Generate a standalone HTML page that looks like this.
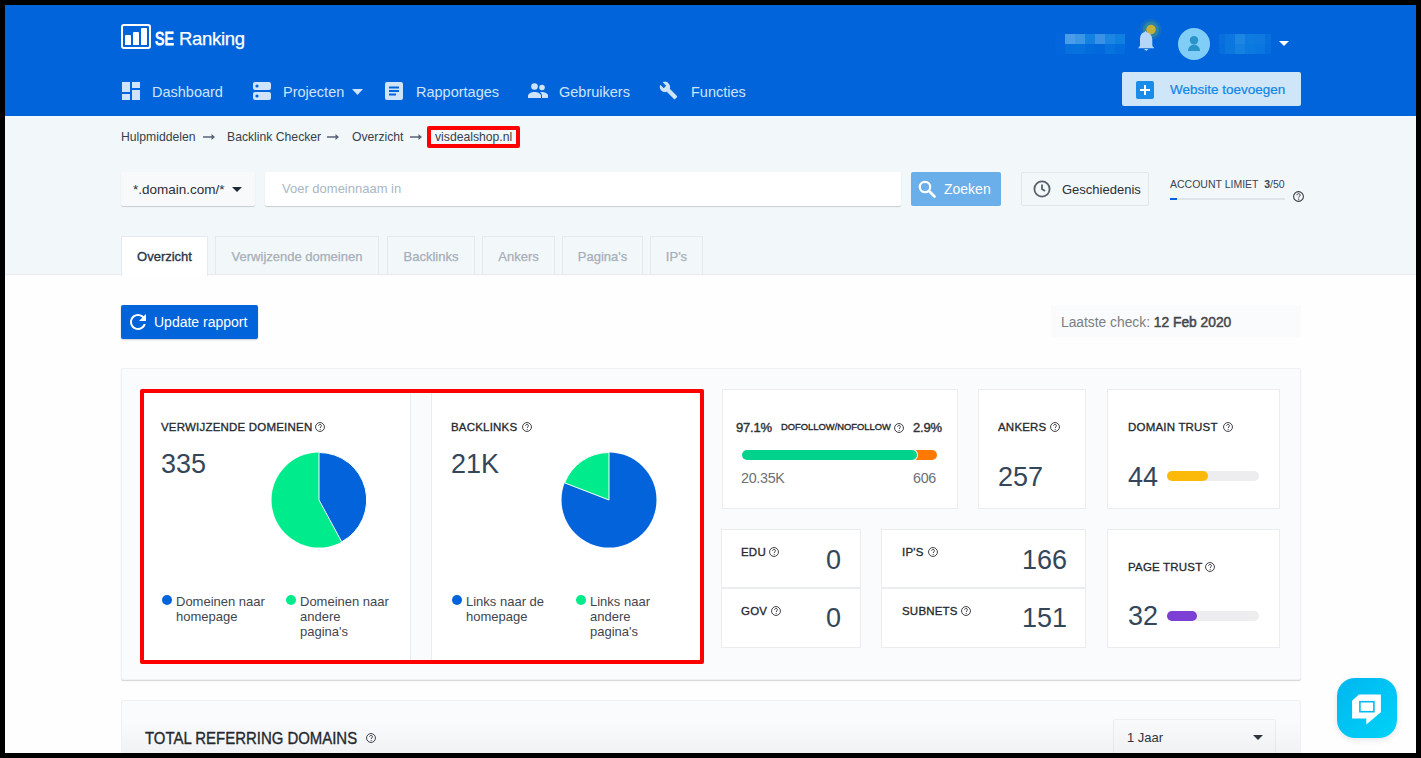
<!DOCTYPE html>
<html><head><meta charset="utf-8">
<style>
*{box-sizing:border-box;margin:0;padding:0}
html,body{width:1421px;height:758px;overflow:hidden;background:#fefeff;font-family:"Liberation Sans",sans-serif;position:relative}
.a{position:absolute;white-space:nowrap}
.bd{position:absolute;background:#000;z-index:100}
#hdr{position:absolute;left:0;top:0;width:1421px;height:116px;background:#0264db}
#sub{position:absolute;left:0;top:116px;width:1421px;height:159px;background:#f2f7fa}
.nav{color:#cfe4fa;font-size:14.5px;line-height:18px}
.bc{color:#363f4b;font-size:12.2px;line-height:16px}
.arr{position:absolute;width:12px;height:6px}
.card{position:absolute;background:#fff;border:1px solid #ebecef}
.lbl{font-size:11.5px;font-weight:normal;-webkit-text-stroke:0.3px #25282d;color:#25282d;letter-spacing:0.2px;line-height:14px}
.num{font-size:27px;color:#34465a;line-height:30px}
.q{position:absolute;width:10px;height:10px}
.tab{position:absolute;top:236px;height:39px;border:1px solid #e6e9ed;border-bottom:none;background:#f2f7fa;color:#a6aeb8;-webkit-text-stroke:0.25px #a6aeb8;font-size:13px;line-height:40px;text-align:center}
.leg{font-size:13px;line-height:15px;color:#3f464f}
.dot{position:absolute;width:10px;height:10px;border-radius:50%}
</style></head><body>
<svg width="0" height="0" style="position:absolute"><defs><symbol id="qm" viewBox="0 0 20 20"><circle cx="10" cy="10" r="8.9" fill="none" stroke="#34373c" stroke-width="1.9"/><path d="M7.2 7.8c0-1.8 1.3-3 2.9-3s2.9 1.2 2.9 2.7c0 2.2-2.7 2.3-2.7 4.6" fill="none" stroke="#34373c" stroke-width="1.8"/><circle cx="10.3" cy="14.9" r="1.15" fill="#34373c"/></symbol></defs></svg>
<!-- HEADER -->
<div id="hdr"></div>
<div class="a" style="left:121px;top:24px;width:30px;height:25px;border:2px solid #fff;border-radius:3px"></div>
<div class="a" style="left:125px;top:35px;width:6px;height:10px;background:#fff;border-radius:1px 1px 0 0"></div>
<div class="a" style="left:133px;top:32px;width:6px;height:13px;background:#fff;border-radius:1px 1px 0 0"></div>
<div class="a" style="left:141px;top:28px;width:6px;height:17px;background:#fff;border-radius:1px 1px 0 0"></div>
<div class="a" style="left:155px;top:27px;color:#fff;font-size:18.5px;line-height:24px;-webkit-text-stroke:1px #fff;transform:scaleX(0.76);transform-origin:0 0">SE</div><div class="a" style="left:179px;top:27px;color:#fff;font-size:18.5px;line-height:24px;letter-spacing:-0.3px;-webkit-text-stroke:0.25px #fff">Ranking</div>

<svg class="a" style="left:122px;top:82px" width="18" height="18" viewBox="0 0 18 18"><path fill="#cfe4fa" d="M0 0h8v10H0zM0 12h8v6H0zM10 0h8v6h-8zM10 8h8v10h-8z"/></svg>
<div class="a nav" style="left:152px;top:83px">Dashboard</div>
<svg class="a" style="left:253px;top:82px" width="18" height="18" viewBox="0 0 18 18"><rect x="0" y="0" width="18" height="8" rx="2" fill="#cfe4fa"/><rect x="0" y="10" width="18" height="8" rx="2" fill="#cfe4fa"/><circle cx="4" cy="4" r="1.6" fill="#0264db"/><circle cx="4" cy="14" r="1.6" fill="#0264db"/></svg>
<div class="a nav" style="left:283px;top:83px">Projecten</div>
<svg class="a" style="left:352px;top:89px" width="11" height="6" viewBox="0 0 11 6"><path d="M0 0h11L5.5 6z" fill="#cfe4fa"/></svg>
<svg class="a" style="left:385px;top:82px" width="18" height="18" viewBox="0 0 18 18"><rect width="18" height="18" rx="2" fill="#cfe4fa"/><path d="M4 4.5h10v2H4zM4 8h10v2H4zM4 11.5h7v2H4z" fill="#0264db"/></svg>
<div class="a nav" style="left:416px;top:83px">Rapportages</div>
<svg class="a" style="left:528px;top:83px" width="20" height="15" viewBox="0 0 20 15"><circle cx="6.5" cy="3.5" r="3.3" fill="#cfe4fa"/><circle cx="14" cy="4.5" r="2.8" fill="#cfe4fa"/><path d="M0 15v-2c0-2.5 3.5-4 6.5-4s6.5 1.5 6.5 4v2z" fill="#cfe4fa"/><path d="M13.5 9c3 0 6.5 1.3 6.5 3.5V15h-6v-2c0-1.6-.5-3-2-3.8z" fill="#cfe4fa"/></svg>
<div class="a nav" style="left:559px;top:83px">Gebruikers</div>
<svg class="a" style="left:659px;top:81px" width="19" height="19" viewBox="0 0 24 24"><path fill="#cfe4fa" d="M22.7 19l-9.1-9.1c.9-2.3.4-5-1.5-6.9-2-2-5-2.4-7.4-1.3L9 6 6 9 1.6 4.7C.4 7.1.9 10.1 2.9 12.1c1.9 1.9 4.6 2.4 6.9 1.5l9.1 9.1c.4.4 1 .4 1.4 0l2.3-2.3c.5-.4.5-1.1.1-1.4z"/></svg>
<div class="a nav" style="left:691px;top:83px">Functies</div>

<div class="a" style="left:1055px;top:34px;width:10px;height:10px;background:#0565dc"></div><div class="a" style="left:1055px;top:44px;width:10px;height:10px;background:#0466dc"></div><div class="a" style="left:1065px;top:34px;width:10px;height:10px;background:#4a9de8"></div><div class="a" style="left:1065px;top:44px;width:10px;height:10px;background:#0670dd"></div><div class="a" style="left:1075px;top:34px;width:10px;height:10px;background:#3d95e6"></div><div class="a" style="left:1075px;top:44px;width:10px;height:10px;background:#0672de"></div><div class="a" style="left:1085px;top:34px;width:10px;height:10px;background:#1281e2"></div><div class="a" style="left:1085px;top:44px;width:10px;height:10px;background:#036cdc"></div><div class="a" style="left:1095px;top:34px;width:10px;height:10px;background:#3a92e6"></div><div class="a" style="left:1095px;top:44px;width:10px;height:10px;background:#0268db"></div><div class="a" style="left:1105px;top:34px;width:10px;height:10px;background:#1d86e3"></div><div class="a" style="left:1105px;top:44px;width:10px;height:10px;background:#0672de"></div><div class="a" style="left:1115px;top:34px;width:10px;height:10px;background:#0f80e0"></div><div class="a" style="left:1115px;top:44px;width:10px;height:10px;background:#046ddd"></div>
<svg class="a" style="left:1130px;top:15px" width="36" height="40" viewBox="0 0 36 40"><circle cx="21" cy="14.6" r="10.5" fill="#1a6fb8" opacity=".8"/><circle cx="21" cy="14.6" r="8" fill="#2a84a8"/><circle cx="21" cy="14.6" r="4.8" fill="#c4b03a"/><path d="M8 33.2h16.3l-2-2.4V24.5c0-4-2.3-6.5-6.1-7.6v-.3c0-.5-.3-.7-.7-.7s-.7.2-.7.7v.3C11 18 10 20.5 10 24.5v6.3z" fill="#b5d6f7"/><path d="M14 34h4.5l-2.25 2z" fill="#b5d6f7"/></svg>
<div class="a" style="left:1178px;top:28px;width:32px;height:32px;border-radius:50%;background:#80cdf7"></div>
<svg class="a" style="left:1186px;top:35px" width="16" height="17" viewBox="0 0 16 17"><circle cx="8" cy="5.3" r="4.2" fill="#2a94c8"/><path d="M2 16c0-3.6 2.5-6.2 6-6.2s6 2.6 6 6.2z" fill="#2a94c8"/></svg>
<div class="a" style="left:1219px;top:34px;width:6px;height:10px;background:#0a6fdd"></div><div class="a" style="left:1219px;top:44px;width:6px;height:10px;background:#066ddc"></div><div class="a" style="left:1225px;top:34px;width:10px;height:10px;background:#0b76df"></div><div class="a" style="left:1225px;top:44px;width:10px;height:10px;background:#0a77df"></div><div class="a" style="left:1235px;top:34px;width:10px;height:10px;background:#1d85e3"></div><div class="a" style="left:1235px;top:44px;width:10px;height:10px;background:#1480e1"></div><div class="a" style="left:1245px;top:34px;width:10px;height:10px;background:#0e7be0"></div><div class="a" style="left:1245px;top:44px;width:10px;height:10px;background:#0a7adf"></div><div class="a" style="left:1255px;top:34px;width:10px;height:10px;background:#1079df"></div><div class="a" style="left:1255px;top:44px;width:10px;height:10px;background:#0977df"></div><div class="a" style="left:1265px;top:34px;width:6px;height:10px;background:#0870dd"></div><div class="a" style="left:1265px;top:44px;width:6px;height:10px;background:#056ddc"></div>
<svg class="a" style="left:1279px;top:41px" width="10" height="5" viewBox="0 0 10 5"><path d="M0 0h10L5 5z" fill="#fff"/></svg>
<div class="a" style="left:1122px;top:72px;width:179px;height:34px;background:#cfe5f8;border-radius:2px"></div>
<div class="a" style="left:1136px;top:81px;width:18px;height:18px;background:#1a8be6;border-radius:2px"></div>
<svg class="a" style="left:1136px;top:81px" width="18" height="18" viewBox="0 0 18 18"><path d="M8 4h2v4h4v2h-4v4H8v-4H4V8h4z" fill="#fff"/></svg>
<div class="a" style="left:1170px;top:81px;color:#0d86e8;font-size:13.5px;line-height:18px;-webkit-text-stroke:0.2px #0d86e8">Website toevoegen</div>

<!-- SUB -->
<div id="sub"></div>
<div class="a bc" style="left:121px;top:129px">Hulpmiddelen</div>
<svg class="arr" style="left:203px;top:134px" viewBox="0 0 12 6"><path d="M0 2.2h8.5V0L12 3 8.5 6V3.8H0z" fill="#5a6478"/></svg>
<div class="a bc" style="left:227px;top:129px">Backlink Checker</div>
<svg class="arr" style="left:327px;top:134px" viewBox="0 0 12 6"><path d="M0 2.2h8.5V0L12 3 8.5 6V3.8H0z" fill="#5a6478"/></svg>
<div class="a bc" style="left:352px;top:129px">Overzicht</div>
<svg class="arr" style="left:410px;top:134px" viewBox="0 0 12 6"><path d="M0 2.2h8.5V0L12 3 8.5 6V3.8H0z" fill="#5a6478"/></svg>
<div class="a" style="left:427px;top:126px;width:93px;height:22px;border:4px solid #f00;border-radius:2px"></div>
<div class="a bc" style="left:435px;top:129px">visdealshop.nl</div>

<!-- search row -->
<div class="a" style="left:121px;top:172px;width:134px;height:34px;background:#f8f9fb;border-radius:2px;box-shadow:0 1px 1px rgba(0,0,0,.18)"></div>
<div class="a" style="left:133px;top:182px;font-size:13.5px;line-height:16px;color:#2b2e33">*.domain.com/*</div>
<svg class="a" style="left:232px;top:187px" width="10" height="5" viewBox="0 0 10 5"><path d="M0 0h10L5 5z" fill="#1e2a35"/></svg>
<div class="a" style="left:265px;top:172px;width:636px;height:34px;background:#fff;border-radius:2px;box-shadow:0 1px 1px rgba(0,0,0,.18)"></div>
<div class="a" style="left:282px;top:181px;font-size:13px;line-height:16px;color:#aab6c3">Voer domeinnaam in</div>
<div class="a" style="left:911px;top:172px;width:90px;height:34px;background:#6aaeea;border-radius:2px"></div>
<svg class="a" style="left:918px;top:180px" width="18" height="18" viewBox="0 0 18 18"><circle cx="7" cy="7" r="5.2" fill="none" stroke="#fff" stroke-width="2.2"/><path d="M11 11l5.5 5.5" stroke="#fff" stroke-width="2.6" stroke-linecap="round"/></svg>
<div class="a" style="left:944px;top:180px;font-size:14px;line-height:18px;color:#fff">Zoeken</div>
<div class="a" style="left:1021px;top:172px;width:128px;height:34px;background:#f2f7fa;border:1px solid #e2e6eb;border-radius:2px"></div>
<svg class="a" style="left:1033px;top:180px" width="18" height="18" viewBox="0 0 18 18"><circle cx="9" cy="9" r="7.6" fill="none" stroke="#59616b" stroke-width="1.8"/><path d="M9 4.5V9l3 2" fill="none" stroke="#59616b" stroke-width="1.8"/></svg>
<div class="a" style="left:1062px;top:182px;font-size:13px;line-height:16px;color:#2b2e33">Geschiedenis</div>
<div class="a" style="left:1170px;top:178px;font-size:10.5px;line-height:12px;color:#3b4350">ACCOUNT LIMIET &nbsp;<b>3</b>/50</div>
<div class="a" style="left:1170px;top:198px;width:115px;height:2px;background:#dfe4ea"></div>
<div class="a" style="left:1170px;top:198px;width:7px;height:2px;background:#0264db"></div>
<svg class="a" style="left:1293px;top:191px" width="11" height="11"><use href="#qm"/></svg>

<!-- tabs -->
<div class="a" style="left:0;top:274px;width:1421px;height:1px;background:#e6eaee;z-index:2"></div>
<div class="tab" style="z-index:3;left:121px;width:87px;background:#fff;color:#2a3646;-webkit-text-stroke:0.35px #2a3646;height:40px">Overzicht</div>
<div class="tab" style="left:215px;width:164px">Verwijzende domeinen</div>
<div class="tab" style="left:387px;width:88px">Backlinks</div>
<div class="tab" style="left:482px;width:73px">Ankers</div>
<div class="tab" style="left:562px;width:81px">Pagina's</div>
<div class="tab" style="left:650px;width:53px">IP's</div>

<!-- update row -->
<div class="a" style="left:121px;top:305px;width:137px;height:34px;background:#0264db;border-radius:2px;box-shadow:0 1px 2px rgba(0,0,0,.2)"></div>
<svg class="a" style="left:126px;top:310px" width="24" height="24" viewBox="0 0 24 24"><path fill="#fff" d="M17.65 6.35C16.2 4.9 14.21 4 12 4c-4.42 0-7.99 3.58-7.99 8s3.57 8 7.99 8c3.73 0 6.84-2.55 7.73-6h-2.08c-.82 2.33-3.04 4-5.65 4-3.31 0-6-2.69-6-6s2.69-6 6-6c1.66 0 3.14.69 4.22 1.78L13 11h7V4l-2.35 2.35z"/></svg>
<div class="a" style="left:154px;top:313px;font-size:14px;line-height:18px;color:#fff">Update rapport</div>
<div class="a" style="left:1051px;top:305px;width:250px;height:32px;background:#fafbfd"></div>
<div class="a" style="left:1061px;top:315px;font-size:13.8px;line-height:16px;color:#7b7e83">Laatste check: <span style="color:#45474b;-webkit-text-stroke:0.5px #45474b">12 Feb 2020</span></div>

<!-- main container -->
<div class="a" style="left:121px;top:368px;width:1180px;height:312px;background:#fafbfd;border:1px solid #f0f1f4;border-radius:2px;box-shadow:0 1px 1px rgba(0,0,0,.16)"></div>

<div class="card" style="left:140px;top:389px;width:271px;height:275px"></div>
<div class="card" style="left:431px;top:389px;width:273px;height:275px"></div>
<div class="a" style="left:140px;top:389px;width:564px;height:275px;border:4px solid #f00;border-radius:2px"></div>

<div class="a lbl" style="left:161px;top:420px">VERWIJZENDE DOMEINEN</div>
<div class="a num" style="left:161px;top:449px">335</div>
<svg class="a" style="left:270px;top:451px" width="98" height="98" viewBox="0 0 98 98"><g transform="translate(49 49)"><circle r="47.5" fill="#00ec8c"/><path d="M0 0V-47.5A47.5 47.5 0 0 1 22.7 41.8z" fill="#0263da" stroke="#fff" stroke-width="1"/></g></svg>
<div class="dot" style="left:162px;top:595px;background:#0263da"></div>
<div class="a leg" style="left:176px;top:594px">Domeinen naar<br>homepage</div>
<div class="dot" style="left:286px;top:595px;background:#00ec8c"></div>
<div class="a leg" style="left:300px;top:594px">Domeinen naar<br>andere<br>pagina's</div>

<div class="a lbl" style="left:451px;top:420px">BACKLINKS</div>
<div class="a num" style="left:451px;top:449px">21K</div>
<svg class="a" style="left:560px;top:451px" width="98" height="98" viewBox="0 0 98 98"><g transform="translate(49 49)"><circle r="47.5" fill="#0263da"/><path d="M0 0L-44.3 -17.1A47.5 47.5 0 0 1 0 -47.5z" fill="#00ec8c" stroke="#fff" stroke-width="1"/></g></svg>
<div class="dot" style="left:452px;top:595px;background:#0263da"></div>
<div class="a leg" style="left:466px;top:594px">Links naar de<br>homepage</div>
<div class="dot" style="left:576px;top:595px;background:#00ec8c"></div>
<div class="a leg" style="left:590px;top:594px">Links naar<br>andere<br>pagina's</div>

<!-- dofollow -->
<div class="card" style="left:722px;top:389px;width:236px;height:120px"></div>
<div class="a" style="left:736px;top:421px;font-size:13px;line-height:14px;color:#303338;-webkit-text-stroke:0.4px #303338;letter-spacing:-0.2px">97.1%</div>
<div class="a" style="left:781px;top:421px;font-size:9.4px;line-height:12px;color:#25282d;-webkit-text-stroke:0.35px #25282d">DOFOLLOW/NOFOLLOW</div>
<div class="a" style="left:913px;top:421px;font-size:13px;line-height:14px;color:#303338;-webkit-text-stroke:0.4px #303338;letter-spacing:-0.2px">2.9%</div>
<div class="a" style="left:742px;top:450px;width:195px;height:10px;border-radius:5px;background:#ff7800"></div>
<div class="a" style="left:742px;top:450px;width:175px;height:10px;border-radius:5px;background:#00d28c;box-shadow:0 0 0 1px #fff"></div>
<div class="a" style="left:741px;top:470px;font-size:14.3px;line-height:16px;color:#6c7076;letter-spacing:-0.3px">20.35K</div>
<div class="a" style="left:913px;top:470px;font-size:14.3px;line-height:16px;color:#6c7076;letter-spacing:-0.3px">606</div>

<div class="card" style="left:978px;top:389px;width:108px;height:120px"></div>
<div class="a lbl" style="left:998px;top:420px">ANKERS</div>
<div class="a num" style="left:998px;top:462px">257</div>

<div class="card" style="left:1107px;top:389px;width:173px;height:120px"></div>
<div class="a lbl" style="left:1128px;top:420px">DOMAIN TRUST</div>
<div class="a num" style="left:1128px;top:462px">44</div>
<div class="a" style="left:1167px;top:471px;width:92px;height:10px;border-radius:5px;background:#ededef"></div>
<div class="a" style="left:1167px;top:471px;width:41px;height:10px;border-radius:5px;background:#fbb90a"></div>

<div class="card" style="left:721px;top:529px;width:140px;height:59px"></div>
<div class="card" style="left:721px;top:588px;width:140px;height:60px"></div>
<div class="a lbl" style="left:741px;top:545px">EDU</div>
<div class="a num" style="left:826px;top:545px">0</div>
<div class="a lbl" style="left:741px;top:604px">GOV</div>
<div class="a num" style="left:826px;top:603px">0</div>

<div class="card" style="left:881px;top:529px;width:205px;height:59px"></div>
<div class="card" style="left:881px;top:588px;width:205px;height:60px"></div>
<div class="a lbl" style="left:902px;top:545px">IP'S</div>
<div class="a num" style="left:1022px;top:545px">166</div>
<div class="a lbl" style="left:902px;top:604px">SUBNETS</div>
<div class="a num" style="left:1022px;top:603px">151</div>

<div class="card" style="left:1107px;top:529px;width:173px;height:119px"></div>
<div class="a lbl" style="left:1128px;top:560px">PAGE TRUST</div>
<div class="a num" style="left:1128px;top:601px">32</div>
<div class="a" style="left:1167px;top:611px;width:92px;height:10px;border-radius:5px;background:#ededef"></div>
<div class="a" style="left:1167px;top:611px;width:30px;height:10px;border-radius:5px;background:#7b3fd3"></div>

<!-- second container -->
<div class="a" style="left:121px;top:700px;width:1180px;height:80px;background:#fafbfd;border:1px solid #f0f1f4;border-radius:2px"></div>
<div class="a" style="left:145px;top:729px;font-size:16.5px;line-height:18px;color:#24292f;-webkit-text-stroke:0.35px #24292f;transform:scaleX(0.905);transform-origin:0 0">TOTAL REFERRING DOMAINS</div>
<div class="a" style="left:1113px;top:719px;width:163px;height:50px;background:#f9fafb;border:1px solid #eceef1;border-radius:2px"></div>
<div class="a" style="left:1127px;top:730px;font-size:13px;line-height:16px;color:#2d3641">1 Jaar</div>
<svg class="a" style="left:1253px;top:735px" width="10" height="5" viewBox="0 0 10 5"><path d="M0 0h10L5 5z" fill="#2d3641"/></svg>

<div class="a" style="left:122px;top:720px;width:1178px;height:33px;background:linear-gradient(rgba(0,0,0,0),rgba(0,0,0,.035))"></div>
<!-- chat -->
<div class="a" style="left:1337px;top:678px;width:60px;height:60px;border-radius:18px;background:linear-gradient(135deg,#00b6f0,#00d3f7);box-shadow:0 2px 6px rgba(0,0,0,.10)"></div>
<svg class="a" style="left:1337px;top:678px" width="60" height="60" viewBox="0 0 60 60"><path d="M15.1 22.7L21.9 16.4H43.9V34.3L29.3 46.4V40.6H15.1z" fill="#fff"/><rect x="22.9" y="23.7" width="14" height="10" fill="none" stroke="#08b9ef" stroke-width="1.6"/></svg>

<svg class="a" style="left:315px;top:422px" width="10" height="10"><use href="#qm"/></svg><svg class="a" style="left:522px;top:422px" width="10" height="10"><use href="#qm"/></svg><svg class="a" style="left:894px;top:423px" width="10" height="10"><use href="#qm"/></svg><svg class="a" style="left:1050px;top:422px" width="10" height="10"><use href="#qm"/></svg><svg class="a" style="left:1223px;top:422px" width="10" height="10"><use href="#qm"/></svg><svg class="a" style="left:769px;top:547px" width="10" height="10"><use href="#qm"/></svg><svg class="a" style="left:771px;top:606px" width="10" height="10"><use href="#qm"/></svg><svg class="a" style="left:928px;top:547px" width="10" height="10"><use href="#qm"/></svg><svg class="a" style="left:961px;top:606px" width="10" height="10"><use href="#qm"/></svg><svg class="a" style="left:1205px;top:562px" width="10" height="10"><use href="#qm"/></svg><svg class="a" style="left:366px;top:733px" width="10" height="10"><use href="#qm"/></svg>
<!-- black border -->
<div class="bd" style="left:0;top:0;width:1421px;height:5px"></div>
<div class="bd" style="left:0;top:753px;width:1421px;height:5px"></div>
<div class="bd" style="left:0;top:0;width:5px;height:758px"></div>
<div class="bd" style="left:1416px;top:0;width:5px;height:758px"></div>
</body></html>
